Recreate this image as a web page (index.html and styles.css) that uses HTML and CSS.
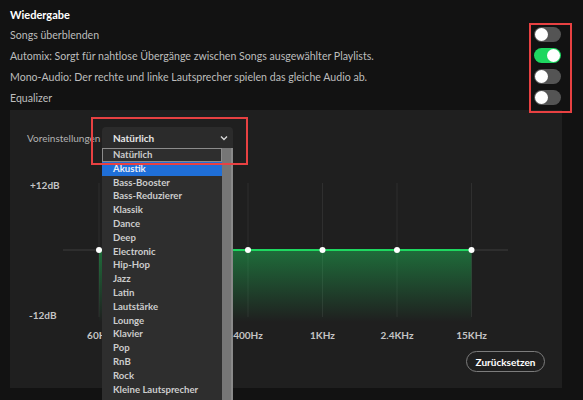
FILE: index.html
```html
<!DOCTYPE html>
<html lang="de">
<head>
<meta charset="utf-8">
<link rel="stylesheet" href="styles.css">
</head>
<body>
<div class="page">
  <h1 class="title">Wiedergabe</h1>
  <div class="rows">
    <div class="row"><span>Songs überblenden</span><span class="toggle"></span></div>
    <div class="row"><span>Automix: Sorgt für nahtlose Übergänge zwischen Songs ausgewählter Playlists.</span><span class="toggle on"></span></div>
    <div class="row"><span>Mono-Audio: Der rechte und linke Lautsprecher spielen das gleiche Audio ab.</span><span class="toggle"></span></div>
    <div class="row"><span>Equalizer</span><span class="toggle"></span></div>
  </div>
  <div class="panel">
    <div class="preset">
      <span class="preset-label">Voreinstellungen</span>
      <div class="select">
        <span class="select-value">Natürlich</span>
        <svg class="chev" width="8" height="6" viewBox="0 0 8 6"><polyline points="1,1.5 4,4.5 7,1.5" fill="none" stroke="#d8d8d8" stroke-width="1.4"/></svg>
        <div class="dropdown">
          <ul class="options">
            <li class="opt focused">Natürlich</li>
            <li class="opt hl">Akustik</li>
            <li class="opt">Bass-Booster</li>
            <li class="opt">Bass-Reduzierer</li>
            <li class="opt">Klassik</li>
            <li class="opt">Dance</li>
            <li class="opt">Deep</li>
            <li class="opt">Electronic</li>
            <li class="opt">Hip-Hop</li>
            <li class="opt">Jazz</li>
            <li class="opt">Latin</li>
            <li class="opt">Lautstärke</li>
            <li class="opt">Lounge</li>
            <li class="opt">Klavier</li>
            <li class="opt">Pop</li>
            <li class="opt">RnB</li>
            <li class="opt">Rock</li>
            <li class="opt">Kleine Lautsprecher</li>
          </ul>
          <div class="scrollbar"></div>
        </div>
      </div>
    </div>
    <svg class="chart" width="552" height="185" viewBox="0 0 552 185">
      <defs>
        <linearGradient id="fill" x1="0" y1="0" x2="0" y2="1">
          <stop offset="0" stop-color="#1ed760" stop-opacity="0.42"/>
          <stop offset="1" stop-color="#1ed760" stop-opacity="0"/>
        </linearGradient>
      </defs>
      <text class="db" x="20" y="29">+12dB</text>
      <text class="db" x="19" y="159">-12dB</text>
      <line x1="53" y1="90" x2="498" y2="90" stroke="#343434" stroke-width="1.5"/>
      <g stroke="#2f2f2f" stroke-width="1">
        <line x1="89" y1="23" x2="89" y2="157"/>
        <line x1="163.5" y1="23" x2="163.5" y2="157"/>
        <line x1="238" y1="23" x2="238" y2="157"/>
        <line x1="312.5" y1="23" x2="312.5" y2="157"/>
        <line x1="387" y1="23" x2="387" y2="157"/>
        <line x1="461.5" y1="23" x2="461.5" y2="157"/>
      </g>
      <rect x="89" y="90" width="372.5" height="72" fill="url(#fill)"/>
      <line x1="89" y1="90" x2="461.5" y2="90" stroke="#1ed760" stroke-width="2.2"/>
      <g fill="#ffffff">
        <circle cx="89" cy="90" r="3"/>
        <circle cx="163.5" cy="90" r="3"/>
        <circle cx="238" cy="90" r="3"/>
        <circle cx="312.5" cy="90" r="3"/>
        <circle cx="387" cy="90" r="3"/>
        <circle cx="461.5" cy="90" r="3"/>
      </g>
      <g class="freq" text-anchor="middle">
        <text x="89" y="179">60Hz</text>
        <text x="163.5" y="179">150Hz</text>
        <text x="238" y="179">400Hz</text>
        <text x="312.5" y="179">1KHz</text>
        <text x="387" y="179">2.4KHz</text>
        <text x="461.5" y="179">15KHz</text>
      </g>
    </svg>
    <div class="actions"><button class="reset">Zurücksetzen</button></div>
  </div>
  <div class="mark mark-toggles"></div>
  <div class="mark mark-select"></div>
</div>
</body>
</html>
```
FILE: styles.css
```css
* { box-sizing: border-box; }
html, body { margin: 0; padding: 0; }
body {
  background: #121212;
  font-family: Lato, "Noto Sans", sans-serif;
  color: #b3b3b3;
  width: 583px;
  height: 400px;
  overflow: hidden;
}
.page { position: relative; width: 583px; height: 400px; padding-top: 8px; }
.title {
  margin: 0 0 2px 10px;
  font-size: 11px;
  line-height: 14px;
  font-weight: 700;
  color: #ffffff;
}
.rows { display: flex; flex-direction: column; padding: 0 22px 0 10px; }
.row {
  height: 21px;
  display: flex;
  align-items: center;
  justify-content: space-between;
  font-size: 10.6px;
  color: #bdbdbd;
}
.toggle {
  position: relative;
  width: 27px;
  height: 15px;
  border-radius: 8px;
  background: #545454;
  flex: none;
}
.toggle::after {
  content: "";
  position: absolute;
  left: 1px;
  top: 1px;
  width: 13px;
  height: 13px;
  border-radius: 50%;
  background: #ffffff;
}
.toggle.on { background: #1ed760; }
.toggle.on::after { left: 13px; }
.panel {
  margin: 2px 0 0 10px;
  width: 552px;
  height: 278px;
  background: #1f1f1f;
  padding-top: 17px;
  display: flex;
  flex-direction: column;
}
.preset { display: flex; align-items: center; height: 21px; padding-left: 17px; }
.preset-label { width: 75px; font-size: 10px; color: #b3b3b3; }
.select {
  position: relative;
  width: 131px;
  height: 21px;
  background: #2b2b2b;
  border-radius: 4px 4px 0 0;
  display: flex;
  align-items: center;
  justify-content: space-between;
  padding: 0 5px 0 11px;
}
.select-value { font-size: 10px; font-weight: 700; color: #e6e6e6; }
.chev { display: block; }
.dropdown {
  position: absolute;
  left: 0;
  top: 21px;
  width: 131px;
  height: 260px;
  background: #2e2e2e;
  display: flex;
  z-index: 5;
}
.options { list-style: none; margin: 0; padding: 0; width: 120px; }
.opt {
  height: 13.8px;
  line-height: 13.8px;
  padding-left: 11px;
  font-size: 9.6px;
  font-weight: 700;
  color: #cccccc;
  white-space: nowrap;
}
.opt.focused { border: 1px solid #8c8c8c; padding-left: 10px; line-height: 11.8px; }
.opt.hl { background: #1f6fd8; color: #e8eef8; }
.scrollbar { width: 11px; background: #767676; border-right: 2px solid #8a8a8a; }
.chart { display: block; margin-top: 12px; }
.chart .db { font-size: 10px; font-weight: 700; fill: #c4c4c4; font-family: Lato, sans-serif; }
.chart .freq { font-size: 10px; font-weight: 700; fill: #c4c4c4; font-family: Lato, sans-serif; }
.actions { display: flex; justify-content: flex-end; padding-right: 17px; margin-top: 6px; }
.reset {
  height: 21px;
  width: 79px;
  border-radius: 11px;
  border: 1px solid #7c7c7c;
  background: transparent;
  color: #ffffff;
  font-family: Lato, sans-serif;
  font-size: 10px;
  font-weight: 700;
  padding: 0;
}
.mark { position: absolute; border: 2px solid #e84142; z-index: 10; pointer-events: none; }
.mark-toggles { left: 529px; top: 23px; width: 43px; height: 90px; }
.mark-select { left: 91px; top: 117px; width: 157px; height: 48px; }
```
